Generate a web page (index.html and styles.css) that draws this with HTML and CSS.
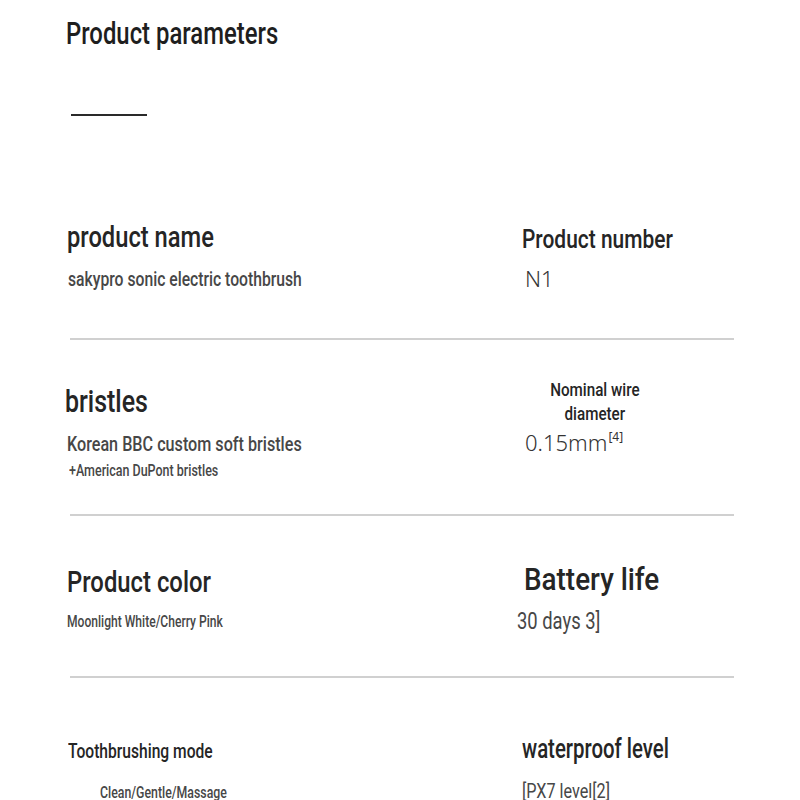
FILE: index.html
```html
<!DOCTYPE html>
<html>
<head>
<meta charset="utf-8">
<link rel="stylesheet" href="styles.css">
</head>
<body>
<div class="page">
  <h1 class="title"><span class="sq">Product parameters</span></h1>
  <div class="short-rule"></div>

  <section class="row row-1">
    <div class="cell">
      <div class="label l-name"><span class="sq">product name</span></div>
      <div class="value v-name"><span class="sq">sakypro sonic electric toothbrush</span></div>
    </div>
    <div class="cell">
      <div class="label l-number"><span class="sq">Product number</span></div>
      <div class="value num v-number">N1</div>
    </div>
  </section>
  <div class="divider"></div>

  <section class="row row-2">
    <div class="cell">
      <div class="label l-bristles"><span class="sq">bristles</span></div>
      <div class="value v-bristles"><span class="sq">Korean BBC custom soft bristles</span></div>
      <div class="value v-dupont"><span class="sq">+American DuPont bristles</span></div>
    </div>
    <div class="cell">
      <div class="label l-wire"><span class="sq sq-center">Nominal wire<br>diameter</span></div>
      <div class="value num v-wire">0.15mm<sup>[4]</sup></div>
    </div>
  </section>
  <div class="divider"></div>

  <section class="row row-3">
    <div class="cell">
      <div class="label l-color"><span class="sq">Product color</span></div>
      <div class="value v-color"><span class="sq">Moonlight White/Cherry Pink</span></div>
    </div>
    <div class="cell">
      <div class="label l-battery"><span class="sq">Battery life</span></div>
      <div class="value v-battery"><span class="sq">30 days 3]</span></div>
    </div>
  </section>
  <div class="divider"></div>

  <section class="row row-4">
    <div class="cell">
      <div class="label l-mode"><span class="sq">Toothbrushing mode</span></div>
      <div class="value v-mode"><span class="sq">Clean/Gentle/Massage</span></div>
    </div>
    <div class="cell">
      <div class="label l-water"><span class="sq">waterproof level</span></div>
      <div class="value v-water"><span class="sq">[PX7 level[2]</span></div>
    </div>
  </section>
</div>
</body>
</html>
```

FILE: styles.css
```css
html, body {
  margin: 0;
  padding: 0;
  background: #ffffff;
}
body {
  font-family: Roboto, "Liberation Sans", sans-serif;
  font-weight: 500;
  color: #222;
}
.page {
  width: 800px;
  height: 800px;
  overflow: hidden;
}
.sq {
  display: inline-block;
  white-space: nowrap;
  transform: scaleX(var(--sx, 0.78));
  transform-origin: 0 0;
}
.sq-center {
  transform-origin: 50% 0;
  text-align: center;
}
.title {
  margin: 0;
  padding: 18px 0 0 66px;
  font-size: 31px;
  font-weight: 500;
  line-height: 1;
  color: #1e1e1e;
  --sx: 0.77;
}
.short-rule {
  margin: 65px 0 0 71px;
  width: 76px;
  height: 2px;
  background: #2a2a2a;
}
.row {
  display: grid;
  grid-template-columns: 455px 1fr;
  padding-left: 67px;
  box-sizing: border-box;
}
.cell {
  display: flex;
  flex-direction: column;
  align-items: flex-start;
}
.label {
  color: #252525;
  line-height: 1;
}
.value {
  color: #474747;
  line-height: 1;
}
.num {
  font-family: "Noto Sans", "Open Sans", sans-serif;
  font-weight: 300;
  color: #333;
}
.divider {
  margin-left: 70px;
  width: 664px;
  height: 2px;
  background: #d0d0d0;
}

.row-1 { height: 222px; }
.l-name { font-size: 30px; margin-top: 106px; --sx: 0.79; }
.v-name { font-size: 20px; margin-top: 17px; margin-left: 1px; --sx: 0.785; }
.l-number { font-size: 26px; margin-top: 110px; --sx: 0.805; }
.v-number { font-size: 22px; margin-top: 15px; margin-left: 3px; }

.row-2 { height: 174px; }
.l-bristles { font-size: 32px; margin-top: 45px; margin-left: -2px; }
.v-bristles { font-size: 21px; margin-top: 17px; --sx: 0.77; }
.v-dupont { font-size: 16px; margin-top: 8px; margin-left: 2px; }
.l-wire { font-size: 19px; line-height: 24px; margin-top: 38px; width: 146px; text-align: center; --sx: 0.8; }
.v-wire { font-size: 22px; margin-top: 5px; margin-left: 3px; }
.v-wire sup {
  font-size: 12px;
  font-weight: 400;
  vertical-align: baseline;
  position: relative;
  top: -0.85em;
  margin-left: 1px;
}

.row-3 { height: 160px; }
.l-color { font-size: 30px; margin-top: 51px; --sx: 0.795; }
.v-color { font-size: 16px; margin-top: 17px; --sx: 0.755; }
.l-battery { font-size: 32px; margin-top: 47px; margin-left: 2px; --sx: 0.87; }
.v-battery { font-size: 23px; font-weight: 400; margin-top: 15px; margin-left: -5px; --sx: 0.8; }

.l-mode { font-size: 20px; margin-top: 63px; margin-left: 1px; }
.v-mode { font-size: 16px; margin-top: 24px; margin-left: 33px; --sx: 0.77; }
.l-water { font-size: 27px; margin-top: 58px; --sx: 0.755; }
.v-water { font-size: 20px; font-weight: 400; margin-top: 18px; --sx: 0.81; }
```
